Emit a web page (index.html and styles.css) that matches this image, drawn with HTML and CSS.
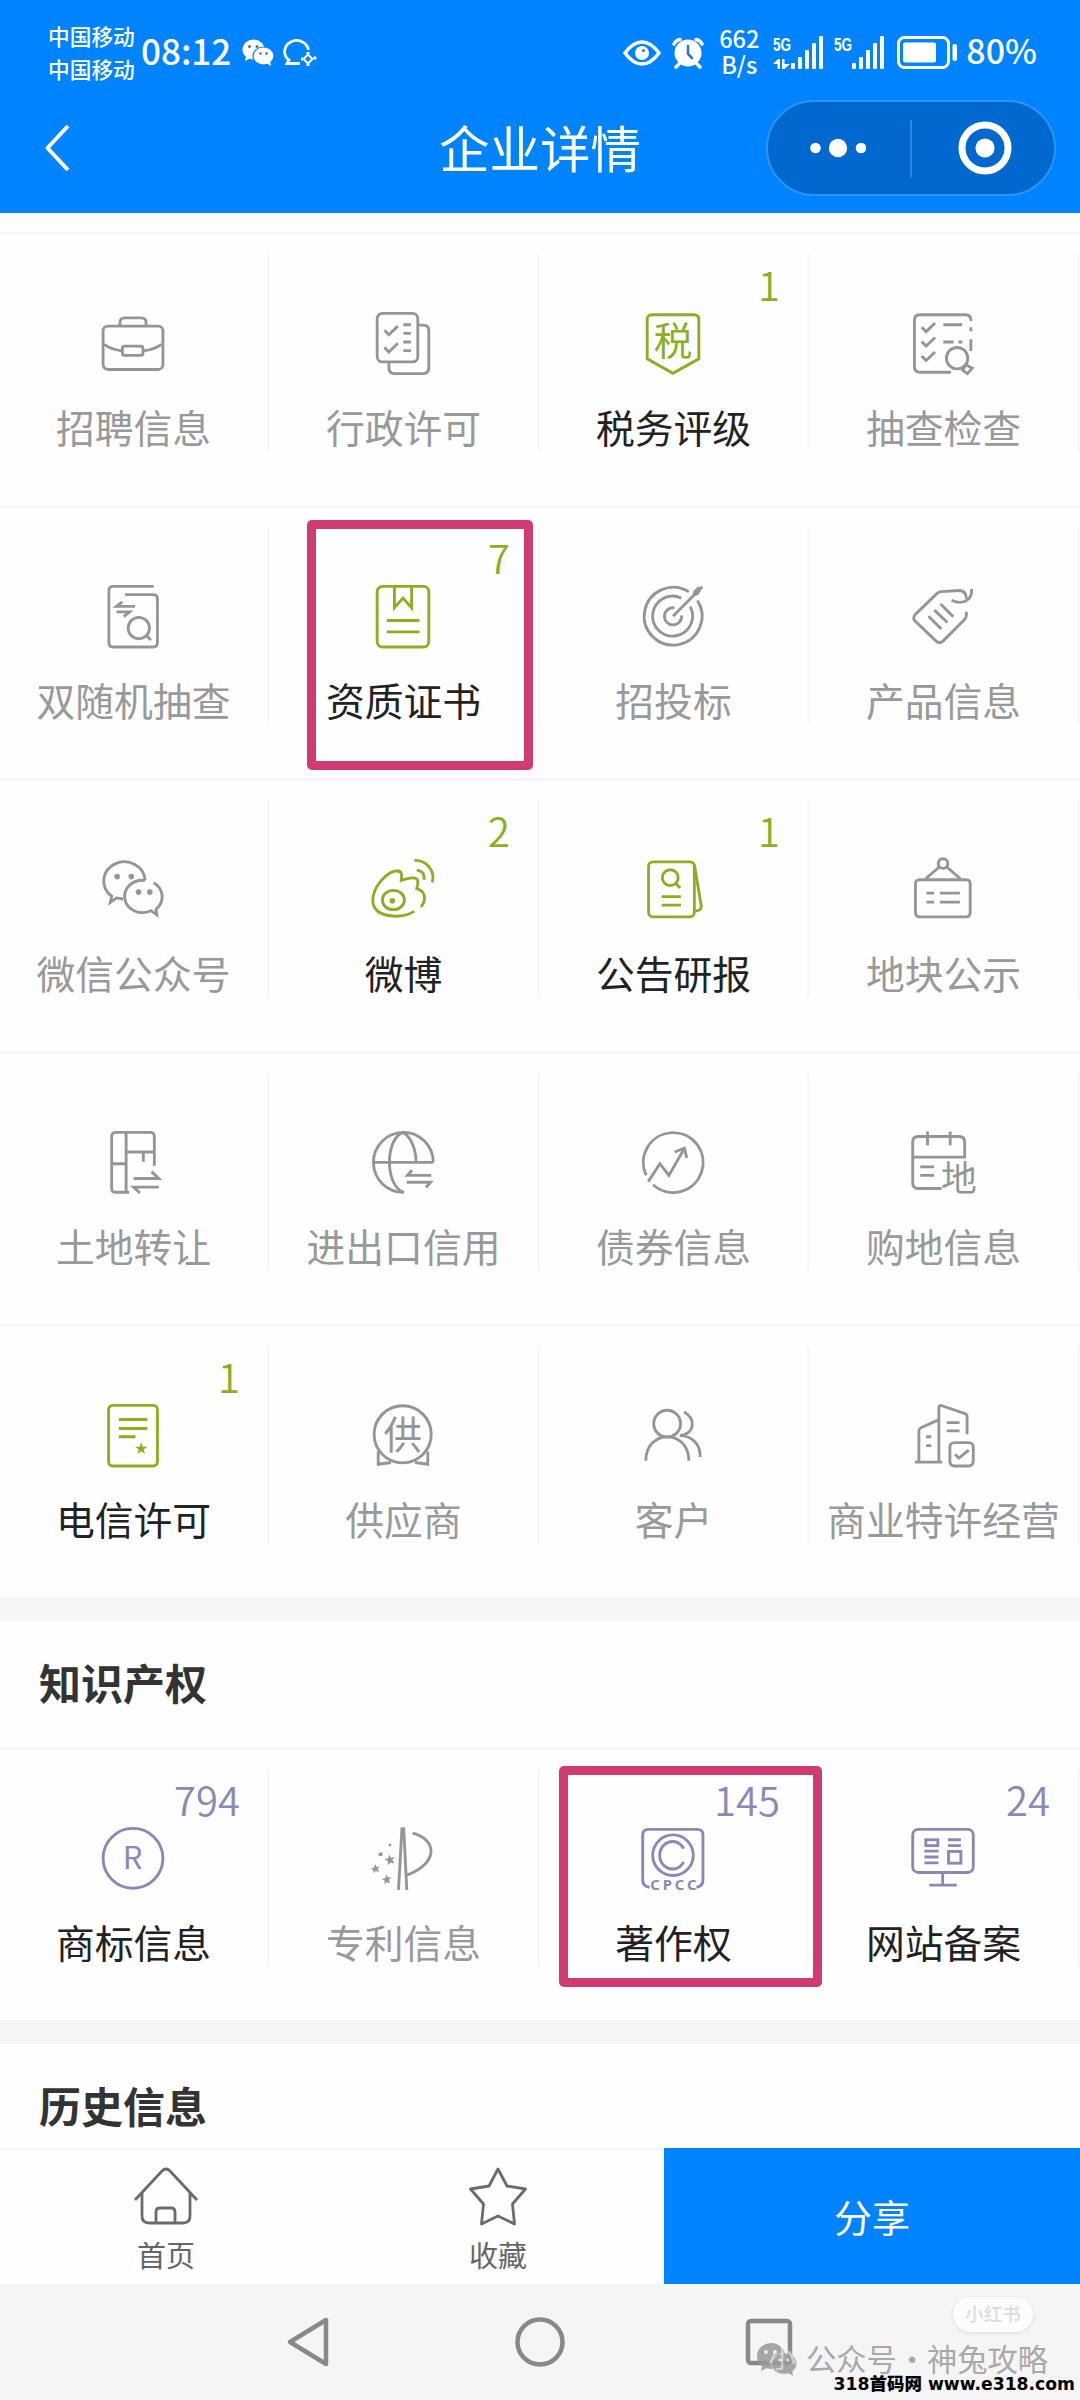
FILE: index.html
```html
<!DOCTYPE html>
<html lang="zh-CN">
<head>
<meta charset="utf-8">
<title>企业详情</title>
<link rel="stylesheet" href="styles.css">
</head>
<body>
<header class="header">
  <div class="status">
    <div class="carriers"><span>中国移动</span><span>中国移动</span></div>
    <span class="clock">08:12</span>
    <svg class="st-wechat" width="32" height="27" viewBox="0 0 32 27"><ellipse cx="11.5" cy="10.5" rx="11" ry="10" fill="#fff"/><path d="M4 17l-1 5 6-3z" fill="#fff"/><ellipse cx="21.500" cy="17" rx="10.500" ry="9" fill="#fff" stroke="#0083ff" stroke-width="1.200"/><path d="M24 24l5 3-1-5z" fill="#fff"/><g fill="#55708c"><circle cx="7.500" cy="7.500" r="1.500"/><circle cx="15" cy="7.500" r="1.500"/><circle cx="18.500" cy="14.500" r="1.300"/><circle cx="24.500" cy="14.500" r="1.300"/></g></svg>
    <svg class="st-bubble" width="34" height="28" viewBox="0 0 34 28" fill="none" stroke="#fff" stroke-width="2.800"><path d="M25.500 11A12 11 0 1 0 6 21l-2 3.500h13"/><path d="M25 15v-2M20 20h-2M31 20l2-2M25 25v2" stroke-width="3"/><path d="M25 15.500l4.500 4.500-4.500 4.500-4.500-4.500z" stroke-width="2"/></svg>
    <div class="status-right">
      <svg width="38" height="26" viewBox="0 0 38 26"><path d="M2 13Q10 2 19 2T36 13Q28 24 19 24T2 13Z" fill="none" stroke="#fff" stroke-width="3.500"/><circle cx="19" cy="13" r="7" fill="#fff"/><circle cx="20.500" cy="10.500" r="1.600" fill="#3a7fb0"/></svg>
      <svg class="alarm" width="32" height="32" viewBox="0 0 32 32" stroke="#fff" stroke-width="3.500" stroke-linecap="round"><circle cx="16" cy="16" r="13.500" fill="#fff" stroke="none"/><path d="M2 7Q4 3 8 2.500M30 7Q28 3 24 2.500M7 27l-3 3M25 27l3 3" fill="none"/><path d="M16 9v8l4 4" fill="none" stroke="#2a78c0" stroke-width="2.500"/></svg>
      <div class="speed"><span>662</span><span>B/s</span></div>
      <div class="signal"><div class="sig-left"><b>5G</b><svg width="17" height="10" viewBox="0 0 17 10" fill="#fff"><path d="M0 5l5-5h2v10H4.500V5zM9 0h2.500v5H17l-5.500 5H9z"/></svg></div><svg class="bars" width="34" height="33" viewBox="0 0 34 33" fill="#fff"><rect x="1" y="27" width="4" height="6" rx="1"/><rect x="8" y="21" width="4" height="12" rx="1"/><rect x="15" y="14" width="4" height="19" rx="1"/><rect x="22" y="7" width="4" height="26" rx="1"/><rect x="29" y="0" width="4" height="33" rx="1"/></svg></div>
      <div class="signal"><div class="sig-left"><b>5G</b></div><svg class="bars" width="34" height="33" viewBox="0 0 34 33" fill="#fff"><rect x="1" y="27" width="4" height="6" rx="1"/><rect x="8" y="21" width="4" height="12" rx="1"/><rect x="15" y="14" width="4" height="19" rx="1"/><rect x="22" y="7" width="4" height="26" rx="1"/><rect x="29" y="0" width="4" height="33" rx="1"/></svg></div>
      <svg class="battery" width="61" height="33" viewBox="0 0 61 33"><rect x="1.500" y="1.500" width="50" height="30" rx="6" fill="none" stroke="#fff" stroke-width="3"/><rect x="6" y="6.500" width="33" height="20" rx="2" fill="#fff"/><rect x="55.500" y="8" width="4.500" height="17" rx="2" fill="#fff"/></svg>
      <span class="clock percent">80%</span>
    </div>
  </div>
  <div class="titlebar">
    <svg class="back" width="28" height="50" viewBox="0 0 28 50" fill="none" stroke="#fff" stroke-width="4"><path d="M24 3L3.500 25 24 47" stroke-linejoin="round"/></svg>
    <h1>企业详情</h1>
    <div class="capsule">
      <svg width="56" height="20" viewBox="0 0 56 20" fill="#fff"><circle cx="5.500" cy="10" r="5.300"/><circle cx="28" cy="10" r="9.200"/><circle cx="51" cy="10" r="5.300"/></svg>
      <i></i>
      <svg width="54" height="54" viewBox="0 0 54 54"><circle cx="27" cy="27" r="23" fill="none" stroke="#fff" stroke-width="7"/><circle cx="27" cy="27" r="9.600" fill="#fff"/></svg>
    </div>
  </div>
</header>

<main class="content">
  <section class="grid">
    <div class="cell"><div class="tile">
      <svg class="icon" viewBox="0 0 186 186"><rect x="6" y="44" width="174" height="126" rx="14"/><path d="M55 44V34Q55 20 69 20H117Q131 20 131 34V44M9 97Q30 112 62 116M122 116Q155 112 176 97"/><rect x="62" y="102" width="60" height="27" rx="7"/></svg>
      <span class="label">招聘信息</span></div></div>
    <div class="cell"><div class="tile">
      <svg class="icon" viewBox="0 0 186 186"><rect x="18" y="7" width="118" height="141" rx="15"/><path d="M139 41H152Q168 41 168 57V166Q168 182 152 182H68Q52 182 52 166V150M39 56L52 69 78 44M39 106L52 119 78 94M94 40H116M94 65H116M94 90H116M94 115H116"/></svg>
      <span class="label">行政许可</span></div></div>
    <div class="cell green"><div class="tile"><span class="count">1</span>
      <svg class="icon" viewBox="0 0 186 186"><path d="M32 11H154Q168 11 168 25V139L93 181 18 139V25Q18 11 32 11Z"/><text class="glyph" x="93" y="129" font-size="112">税</text></svg>
      <span class="label">税务评级</span></div></div>
    <div class="cell"><div class="tile">
      <svg class="icon" viewBox="0 0 186 186"><path d="M174 29V27Q174 11 158 11H26Q10 11 10 27V162Q10 178 26 178H116M174 47V59M174 82V116M31 47L44 60 70 35M31 89L44 102 70 77M31 131L44 144 70 119M94 40H149M94 90H124M138 90H149"/><circle cx="134" cy="137" r="31"/><path d="M159 156L178 166 164 182 150 172Z"/></svg>
      <span class="label">抽查检查</span></div></div>

    <div class="cell"><div class="tile">
      <svg class="icon" viewBox="0 0 186 186"><path d="M153 7H35Q23 7 23 19V171Q23 183 35 183H152Q164 183 164 171V43Q164 31 152 31H70M99 65H45L62 52M45 81H83L66 95"/><circle cx="110" cy="128" r="31"/><path d="M132 150L145 163"/></svg>
      <span class="label">双随机抽查</span></div></div>
    <div class="cell green"><div class="tile"><span class="count">7</span>
      <svg class="icon" viewBox="0 0 186 186"><rect x="18" y="7" width="150" height="176" rx="15"/><path d="M68 7V69L93 41 118 69V7M46 106H141M46 139H141"/></svg>
      <span class="label">资质证书</span></div></div>
    <div class="cell"><div class="tile">
      <svg class="icon" viewBox="0 0 186 186"><path d="M139 23A84 84 0 1 0 164 48M117 41A58 58 0 1 0 143 66M97 69A25 25 0 1 0 118 91M93 94L178 8"/><path d="M154 31L157 21 166 13 170 19 163 29Z" class="fill"/></svg>
      <span class="label">招投标</span></div></div>
    <div class="cell"><div class="tile">
      <svg class="icon" viewBox="0 0 186 186"><path d="M161 81V90Q161 98 155 104L93 166Q83 175 73 166L11 107Q5 99 11 90L75 28Q80 23 88 22L139 19Q161 19 161 43M118 47Q145 60 164 46 178 36 176 14M86 58L123 95M68 76L106 112M51 94L88 131"/></svg>
      <span class="label">产品信息</span></div></div>

    <div class="cell"><div class="tile">
      <svg class="icon" viewBox="0 0 186 186"><path d="M128 68A60 56 0 1 0 31 114L27 132 45 119 64 122M153 75A52 48 0 0 1 160 152L162 168 145 156A52 47 0 1 1 128 68"/><g class="fill"><circle cx="47" cy="57" r="4"/><circle cx="88" cy="57" r="4"/><circle cx="109" cy="102" r="4"/><circle cx="142" cy="102" r="4"/></g></svg>
      <span class="label">微信公众号</span></div></div>
    <div class="cell green"><div class="tile"><span class="count">2</span>
      <svg class="icon" viewBox="0 0 186 186"><path d="M126 158C85 182 8 176 5 128 5 85 48 40 78 40 90 42 90 52 88 68 112 60 134 56 136 70 137 80 134 86 133 92 156 98 164 122 145 145M126 10C160 8 188 40 178 74M133 38Q158 42 154 66"/><ellipse cx="65" cy="125" rx="32" ry="28"/><circle cx="62" cy="127" r="4" class="fill"/></svg>
      <span class="label">微博</span></div></div>
    <div class="cell green"><div class="tile"><span class="count">1</span>
      <svg class="icon" viewBox="0 0 186 186"><rect x="22" y="14" width="133" height="160" rx="13"/><path d="M155 22L175 141Q177 156 158 157M102 78L114 90M60 115H116M60 140H116"/><circle cx="85" cy="60" r="23"/></svg>
      <span class="label">公告研报</span></div></div>
    <div class="cell"><div class="tile">
      <svg class="icon" viewBox="0 0 186 186"><circle cx="93" cy="19" r="14"/><path d="M82 29L43 63M104 29L143 63M45 105H67M84 105H142M45 131H67M84 131H142"/><rect x="13" y="66" width="159" height="108" rx="11"/></svg>
      <span class="label">地块公示</span></div></div>

    <div class="cell"><div class="tile">
      <svg class="icon" viewBox="0 0 186 186"><path d="M155 104V19Q155 7 143 7H43Q31 7 31 19V169Q31 181 43 181H82M73 7V181M73 64H155M123 64V92M31 98H73M95 141H168L147 121M168 166H95L113 183"/></svg>
      <span class="label">土地转让</span></div></div>
    <div class="cell"><div class="tile">
      <svg class="icon" viewBox="0 0 186 186"><path d="M181 94A87 87 0 1 0 96 181M6 94H181M93 7C40 25 40 165 96 181M93 7C118 20 131 60 131 94M175 132H106L119 117M104 152H173L160 167"/></svg>
      <span class="label">进出口信用</span></div></div>
    <div class="cell"><div class="tile">
      <svg class="icon" viewBox="0 0 186 186"><path d="M15 132A87 87 0 1 1 35 159M21 150L55 98 81 132 126 54M98 64L126 53 133 81"/></svg>
      <span class="label">债券信息</span></div></div>
    <div class="cell"><div class="tile">
      <svg class="icon" viewBox="0 0 186 186"><path d="M89 170H21Q5 170 5 154V35Q5 19 21 19H140Q156 19 156 35V79H5M48 4V44M114 4V44M27 107H67M27 132H67"/><text class="glyph" x="139" y="178" font-size="104">地</text></svg>
      <span class="label">购地信息</span></div></div>

    <div class="cell green"><div class="tile"><span class="count">1</span>
      <svg class="icon" viewBox="0 0 186 186"><rect x="22" y="7" width="142" height="176" rx="12"/><path d="M52 48H135M52 74H135M52 98H100"/><path class="solid" d="M117 114l4.500 13h13.500l-11 8 4 13-11-8-11 8 4-13-11-8h13.500z"/></svg>
      <span class="label">电信许可</span></div></div>
    <div class="cell"><div class="tile">
      <svg class="icon" viewBox="0 0 186 186"><circle cx="92" cy="91" r="83"/><path d="M21 141V178L58 173M165 141V178L128 173"/><text class="glyph" x="92" y="133" font-size="112">供</text></svg>
      <span class="label">供应商</span></div></div>
    <div class="cell"><div class="tile">
      <svg class="icon" viewBox="0 0 186 186"><circle cx="76" cy="60" r="39"/><path d="M14 168C14 75 139 75 139 168M125 26C160 42 158 90 113 95 150 95 173 122 172 157"/></svg>
      <span class="label">客户</span></div></div>
    <div class="cell"><div class="tile">
      <svg class="icon" viewBox="0 0 186 186"><path d="M23 172V81Q23 75 29 72L80 49M81 172V14Q81 5 90 8L157 31Q163 33 163 39V91M11 172H91M104 57H141M104 81H141M44 98H59M44 124H59M128 149L139 160 168 137"/><rect x="113" y="115" width="68" height="68" rx="13"/></svg>
      <span class="label">商业特许经营</span></div></div>
  </section>

  <h2 class="section-title">知识产权</h2>
  <section class="grid">
    <div class="cell purple"><div class="tile"><span class="count">794</span>
      <svg class="icon" viewBox="0 0 186 186"><circle cx="93" cy="94" r="87"/><text class="glyph" x="92" y="126" font-size="90">R</text></svg>
      <span class="label">商标信息</span></div></div>
    <div class="cell"><div class="tile">
      <svg class="icon" viewBox="0 0 186 186"><path d="M90 4L80 186M95 4L104 186M121 21C188 37 202 105 104 143"/><g class="solid"><path d="M53 83l5 9 11-2-7 9 6 10-11-3-8 8v-12l-10-5 11-3z"/><path d="M12 111l4 8 9-1-6 7 4 9-9-3-7 6v-9l-8-4 9-3z"/><path d="M45 141l4 9 10-1-7 8 4 10-9-4-8 6 1-10-9-5 10-2z"/><circle cx="28" cy="82" r="6"/><circle cx="55" cy="55" r="4"/></g></svg>
      <span class="label">专利信息</span></div></div>
    <div class="cell purple"><div class="tile"><span class="count">145</span>
      <svg class="icon" viewBox="0 0 186 186"><path d="M25 178Q5 176 5 158V26Q5 10 21 10H164Q180 10 180 26V158Q180 176 161 178M124 66A37 40 0 1 0 124 104"/><circle cx="93" cy="85" r="59"/><text class="cpcc" x="94" y="187" font-size="43" textLength="134">CPCC</text></svg>
      <span class="label">著作权</span></div></div>
    <div class="cell purple"><div class="tile"><span class="count">24</span>
      <svg class="icon" viewBox="0 0 186 186"><rect x="5" y="10" width="176" height="125" rx="16"/><path d="M92 135V172M53 172H133M39 73H80M39 90H80M39 107H80M107 40H145M107 57H145"/><rect x="43" y="40" width="35" height="17"/><rect x="109" y="74" width="36" height="34"/></svg>
      <span class="label">网站备案</span></div></div>
  </section>

  <h2 class="section-title">历史信息</h2>
</main>

<nav class="actions">
  <a class="tab"><svg width="66" height="60" viewBox="0 0 66 60"><path d="M2 34L29 5Q33 1 37 5L64 34M9 26V50Q9 57 16 57H50Q57 57 57 50V26M23 57V46Q23 42 27 42H38Q42 42 42 46V57"/></svg><span>首页</span></a>
  <a class="tab"><svg width="66" height="60" viewBox="0 0 66 60"><path d="M33 3L42 20 60.500 23 47.500 38 49.500 58 33 50 16.500 58 18.500 38 5.500 23 24 20Z"/></svg><span>收藏</span></a>
  <a class="share">分享</a>
</nav>

<footer class="sysnav">
  <svg width="44" height="52" viewBox="0 0 44 52"><path d="M40 4V48L4 26Z"/></svg>
  <svg width="52" height="52" viewBox="0 0 52 52"><circle cx="26" cy="26" r="22.500"/></svg>
  <svg width="48" height="48" viewBox="0 0 48 48"><rect x="3" y="3" width="42" height="42" rx="3"/></svg>
</footer>

<div class="mark mark-one"></div>
<div class="mark mark-two"></div>
<div class="pill">小红书</div>
<div class="account">
  <svg width="41" height="34" viewBox="0 0 41 34" fill="#999"><ellipse cx="15" cy="14" rx="14" ry="13"/><path d="M6 23l-1 6 8-4z"/><ellipse cx="28" cy="21.500" rx="12.500" ry="10.500" stroke="#c8c8c8"/><path d="M31 30l6 4-1-7z"/><g fill="#e8e8e8"><circle cx="10" cy="10" r="2"/><circle cx="19" cy="10" r="2"/><circle cx="24" cy="18" r="1.600"/><circle cx="32" cy="18" r="1.600"/></g></svg>
  <span>公众号</span><span class="dot">·</span><span>神兔攻略</span>
</div>
<div class="ghost">小</div>
<div class="site">318<b>首码网</b> www.e318.com</div>
</body>
</html>
```
FILE: styles.css
```css
* { box-sizing: border-box; }
body {
  position: relative;
  display: flex;
  flex-direction: column;
  width: 1080px;
  height: 2400px;
  margin: 0;
  overflow: hidden;
  background: #fefefe;
  font-family: "Noto Sans CJK SC", sans-serif;
}
h1, h2 { margin: 0; }
svg { display: block; flex: none; }

.header {
  flex: none;
  height: 213px;
  background: #0083ff;
  color: #fff;
}
.status {
  display: flex;
  align-items: center;
  height: 100px;
  padding: 5px 43px 0 48px;
}
.carriers {
  display: flex;
  flex-direction: column;
  width: 93px;
  font-size: 21.700px;
  font-weight: 500;
  line-height: 32.500px;
}
.clock {
  font-size: 35px;
  font-weight: 500;
  line-height: 40px;
  margin-top: -5px;
}
.percent { font-size: 34px; }
.st-wechat { margin-left: 11px; }
.st-bubble { margin-left: 9px; }
.status-right {
  display: flex;
  align-items: center;
  margin-left: auto;
}
.alarm { margin-left: 11px; }
.speed {
  display: flex;
  flex-direction: column;
  align-items: center;
  margin: -3px 14px 0 15px;
  font-size: 23.500px;
  font-weight: 500;
  line-height: 26px;
}
.signal { display: flex; height: 33px; width: 51px; margin-right: 10px; }
.sig-left { width: 17px; height: 33px; display: flex; flex-direction: column; justify-content: space-between; }
.sig-left b { font: 700 18px/18px "Liberation Sans", sans-serif; display: block; transform: scaleX(.75); transform-origin: left; }
.battery { margin: 0 8px 0 2px; }

.titlebar {
  display: grid;
  grid-template-columns: 290px 1fr 290px;
  align-items: center;
  height: 96px;
  padding: 0 24px;
}
.back { margin-left: 20px; }
.titlebar h1 {
  font-size: 50.500px;
  font-weight: 400;
  line-height: 70px;
  text-align: center;
  margin-top: -5px;
}
.capsule {
  display: flex;
  align-items: center;
  height: 96px;
  padding: 0 41px 0 42px;
  border: 2px solid #2f92f8;
  border-radius: 48px;
  background: #0068cf;
}
.capsule i { width: 2px; height: 57px; margin: 0 46px 0 44px; background: #2e88e2; }

.content { flex: none; height: 1935px; padding-top: 19px; overflow: hidden; }
.grid { display: grid; grid-template-columns: repeat(4, 270px); grid-auto-rows: 273px; }
.cell {
  padding-top: 19px;
  border-top: 3px solid #f5f5f5;
  --ink: #959595;
  --text: #999;
}
.cell.green { --ink: #8dae22; --text: #222; }
.cell.purple { --ink: #8b88b8; --text: #222; }
.tile {
  position: relative;
  display: flex;
  flex-direction: column;
  align-items: center;
  height: 198px;
  padding-top: 57px;
  border-right: 3px solid #f8f8f8;
}
.icon {
  width: 64px;
  height: 64px;
  margin-right: 1px;
  overflow: visible;
  fill: none;
  stroke: var(--ink);
  stroke-width: 8.300;
}
.icon .fill { fill: var(--ink); }
.icon .solid { fill: var(--ink); stroke: none; }
.icon text { fill: var(--ink); stroke: none; text-anchor: middle; }
.icon .glyph { font-weight: 400; }
.icon .cpcc { font-family: "Noto Sans", sans-serif; font-weight: 700; }
.label {
  margin-top: 26px;
  color: var(--text);
  font-size: 38.800px;
  line-height: 50px;
  white-space: nowrap;
}
.count {
  position: absolute;
  top: 10px;
  right: 27px;
  color: var(--ink);
  font-size: 40px;
  font-weight: 350;
  line-height: 40px;
}
.section-title {
  height: 150px;
  border-top: 24px solid #f6f6f6;
  padding: 0 39px;
  color: #333;
  font-size: 42px;
  font-weight: 700;
  line-height: 121px;
}

.actions { display: flex; flex: none; height: 136px; }
.tab {
  display: flex;
  flex-direction: column;
  align-items: center;
  width: 332px;
  padding-top: 15px;
  border-top: 3px solid #f6f6f6;
  color: #666;
  font-size: 29px;
  line-height: 36px;
}
.tab svg { fill: none; stroke: #6b6b6b; stroke-width: 2.800; stroke-linejoin: round; }
.tab span { margin-top: 10px; }
.share {
  flex: 1;
  background: #0083ff;
  color: #fff;
  font-size: 38px;
  line-height: 136px;
  text-align: center;
}
.sysnav {
  display: flex;
  align-items: center;
  flex: none;
  height: 116px;
  padding: 0 0 0 286px;
  background: #f5f5f5;
}
.sysnav svg { fill: none; stroke: #888; stroke-width: 4.500; stroke-linejoin: round; }
.sysnav svg + svg { margin-left: 184px; }
.sysnav svg + svg + svg { margin-left: 179px; }

/* annotation frames and overlays */
.mark { position: absolute; border: 9px solid #cf3b72; border-radius: 5px; }
.mark-one { left: 307px; top: 520px; width: 226px; height: 250px; }
.mark-two { left: 559px; top: 1766px; width: 263px; height: 221px; }
.pill {
  position: absolute;
  left: 953px;
  top: 2297px;
  width: 80px;
  height: 35px;
  border-radius: 18px;
  background: #fcfcfc;
  box-shadow: 0 1px 4px #ddd;
  color: #dcdcdc;
  font-size: 18.500px;
  font-weight: 500;
  line-height: 33px;
  text-align: center;
}
.ghost {
  position: absolute;
  left: 768px;
  top: 2342px;
  color: rgba(255, 255, 255, .5);
  font-size: 28px;
  line-height: 28px;
}
.account {
  position: absolute;
  left: 756px;
  top: 2339px;
  display: flex;
  align-items: center;
  color: #a9a9a9;
  font-size: 30.300px;
  line-height: 32px;
}
.account svg { margin: 3px 9px 0 0; opacity: .85; }
.account .dot { width: 30px; text-align: center; }
.site {
  position: absolute;
  right: 5px;
  top: 2374px;
  color: #000;
  font: 700 17.200px/18px "DejaVu Sans", sans-serif;
  white-space: nowrap;
}
.site b { font: 900 17.500px/18px "Noto Sans CJK SC", sans-serif; }
```
